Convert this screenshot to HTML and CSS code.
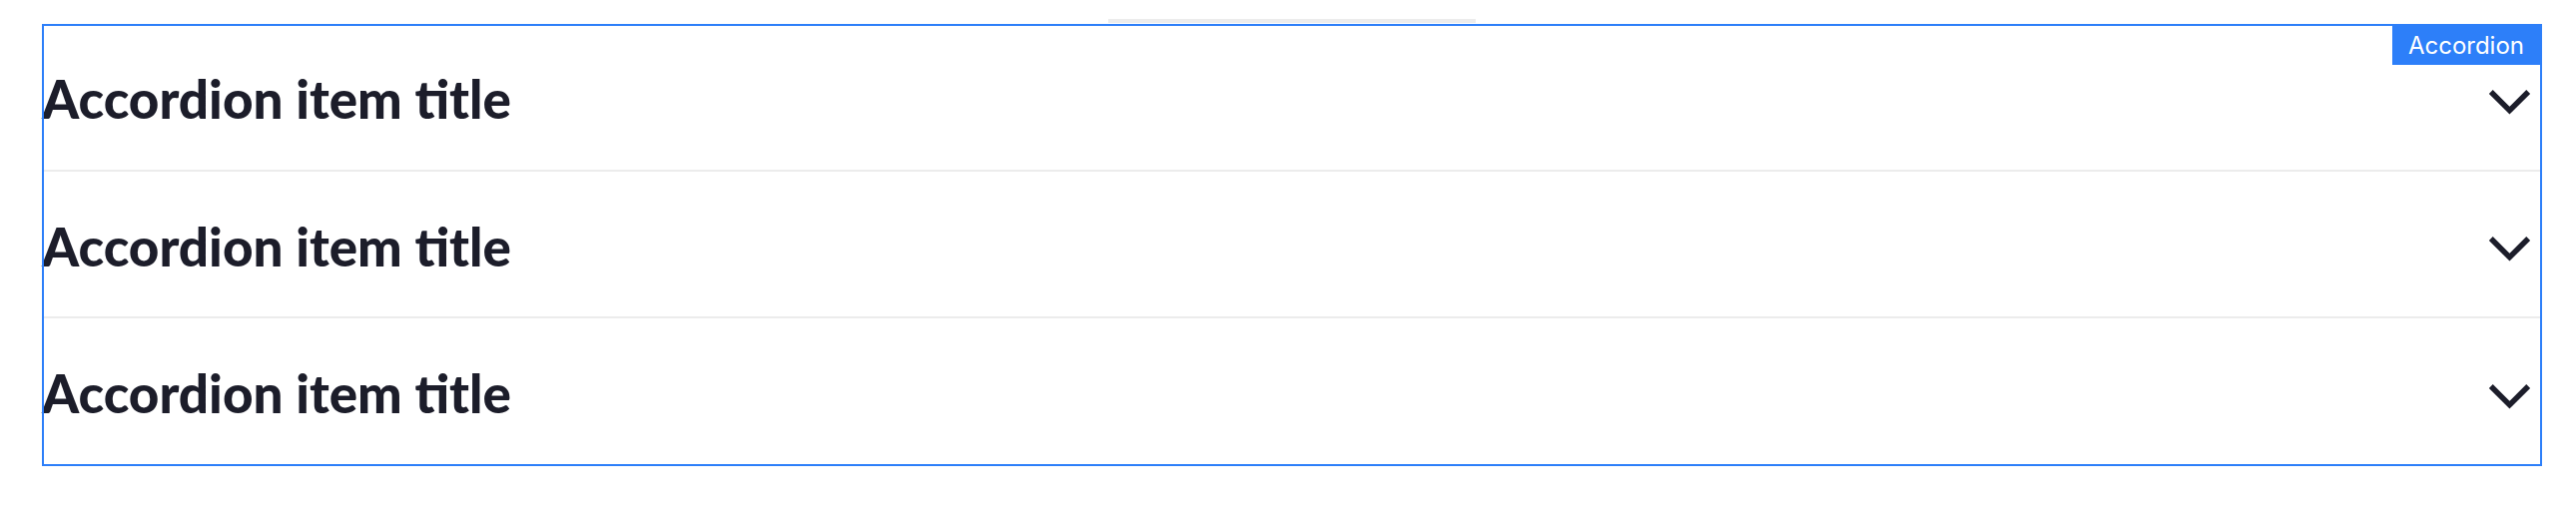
FILE: index.html
```html
<!DOCTYPE html>
<html lang="en">
<head>
<meta charset="utf-8">
<title>Accordion</title>
<link rel="stylesheet" href="styles.css">
</head>
<body>
<div class="page">
  <div class="handle"></div>
  <div class="accordion">
    <div class="item">
      <h3 class="title">Accordion item title</h3>
      <svg class="chevron" viewBox="0 0 44 44" width="44" height="44" aria-hidden="true"><polyline points="2.8,15 21.5,33.7 40.2,15"/></svg>
    </div>
    <div class="item">
      <h3 class="title">Accordion item title</h3>
      <svg class="chevron" viewBox="0 0 44 44" width="44" height="44" aria-hidden="true"><polyline points="2.8,15 21.5,33.7 40.2,15"/></svg>
    </div>
    <div class="item">
      <h3 class="title">Accordion item title</h3>
      <svg class="chevron" viewBox="0 0 44 44" width="44" height="44" aria-hidden="true"><polyline points="2.8,15 21.5,33.7 40.2,15"/></svg>
    </div>
    <div class="badge">Accordion</div>
  </div>
</div>
</body>
</html>
```

FILE: styles.css
```css
html, body {
  margin: 0;
  padding: 0;
  background: #ffffff;
}

.page {
  padding: 19px 34px 0 42px;
}

.handle {
  width: 368px;
  height: 4px;
  margin: 0 auto 1px;
  background: #ececec;
}

.accordion {
  position: relative;
  display: flex;
  flex-direction: column;
}

.accordion::after {
  content: "";
  position: absolute;
  inset: 0;
  border: 2px solid #2d7ff9;
  pointer-events: none;
}

.item {
  box-sizing: border-box;
  height: 147.5px;
  padding-top: 4px;
  border-bottom: 2px solid #ececec;
  display: flex;
  align-items: center;
  justify-content: space-between;
}

.title {
  margin: 0;
  font-family: Lato, "Noto Sans", sans-serif;
  font-weight: 900;
  font-size: 53px;
  color: #1c1d2a;
}

.chevron {
  display: block;
  margin-right: 10px;
  fill: none;
  stroke: #1c1d2a;
  stroke-width: 5.5;
  stroke-linecap: butt;
  stroke-linejoin: miter;
}

.badge {
  position: absolute;
  top: 0;
  right: 0;
  z-index: 1;
  height: 41px;
  padding: 0 18px 0 16px;
  background: #2d7ff9;
  color: #ffffff;
  font-family: Inter, "Noto Sans", sans-serif;
  font-size: 24px;
  line-height: 43px;
  overflow: hidden;
}
```
